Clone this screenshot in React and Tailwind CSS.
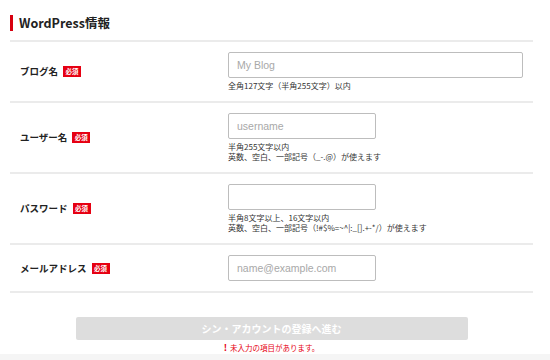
const Badge = () => (
    <span className="ml-[5px] inline-flex items-center justify-center w-[18px] h-[11px] bg-[#e60012] text-white text-[6.5px] font-bold leading-none">
        必須
    </span>
);

const Row = ({ label, children }) => (
    <div className="flex items-center border-b-2 border-[#ebebeb] pt-[10px] pb-[10px]">
        <div className="w-[218px] pl-[10px] flex items-center text-[9.5px] font-bold text-[#222]">
            {label}
            <Badge />
        </div>
        <div className="flex-1">{children}</div>
    </div>
);

const Help = ({ children }) => (
    <div className="mt-[3px] text-[8px] leading-[10px] text-[#333]">{children}</div>
);

const inputCls =
    "block h-[26px] border border-[#bdbdbd] rounded-[2px] bg-white px-[8px] text-[10.5px] font-['Liberation_Sans',sans-serif] placeholder:text-[#a8a8a8] outline-none";

export default function App() {
    return (
        <div className="w-[550px] h-[360px] bg-white overflow-hidden flex flex-col" style={{ fontFamily: '"Noto Sans CJK JP", "Noto Sans", sans-serif' }}>
            <div className="pl-[10px] pr-[17px] flex-1">
                <div className="pt-[15px] pb-[9px] border-b-2 border-[#ebebeb]">
                    <h2 className="border-l-[3px] border-[#d7000f] pl-[6px] text-[12.5px] font-bold leading-[16px] text-[#222]">
                        WordPress情報
                    </h2>
                </div>
                <Row label="ブログ名">
                    <input className={`${inputCls} w-[295px]`} placeholder="My Blog" />
                    <Help>全角127文字（半角255文字）以内</Help>
                </Row>
                <Row label="ユーザー名">
                    <input className={`${inputCls} w-[148px]`} placeholder="username" />
                    <Help>
                        半角255文字以内
                        <br />
                        英数、空白、一部記号（_-.@）が使えます
                    </Help>
                </Row>
                <Row label="パスワード">
                    <input type="password" className={`${inputCls} w-[148px]`} />
                    <Help>
                        半角8文字以上、16文字以内
                        <br />
                        英数、空白、一部記号（!#$%=~^|:_[].+-*/）が使えます
                    </Help>
                </Row>
                <Row label="メールアドレス">
                    <input className={`${inputCls} w-[148px]`} placeholder="name@example.com" />
                </Row>
                <div className="flex flex-col items-center pt-[24px]">
                    <button className="w-[392px] h-[23px] rounded-[2px] bg-[#dddddd] text-white text-[10px] font-bold">
                        シン・アカウントの登録へ進む
                    </button>
                    <div className="mt-[2px] flex items-center text-[7.5px] leading-[12px] text-[#e60012]">
                        <span className="font-bold text-[9px] mr-[3px]">!</span>
                        未入力の項目があります。
                    </div>
                </div>
            </div>
            <div className="h-[7px] bg-[#f5f5f5]"></div>
        </div>
    );
}
